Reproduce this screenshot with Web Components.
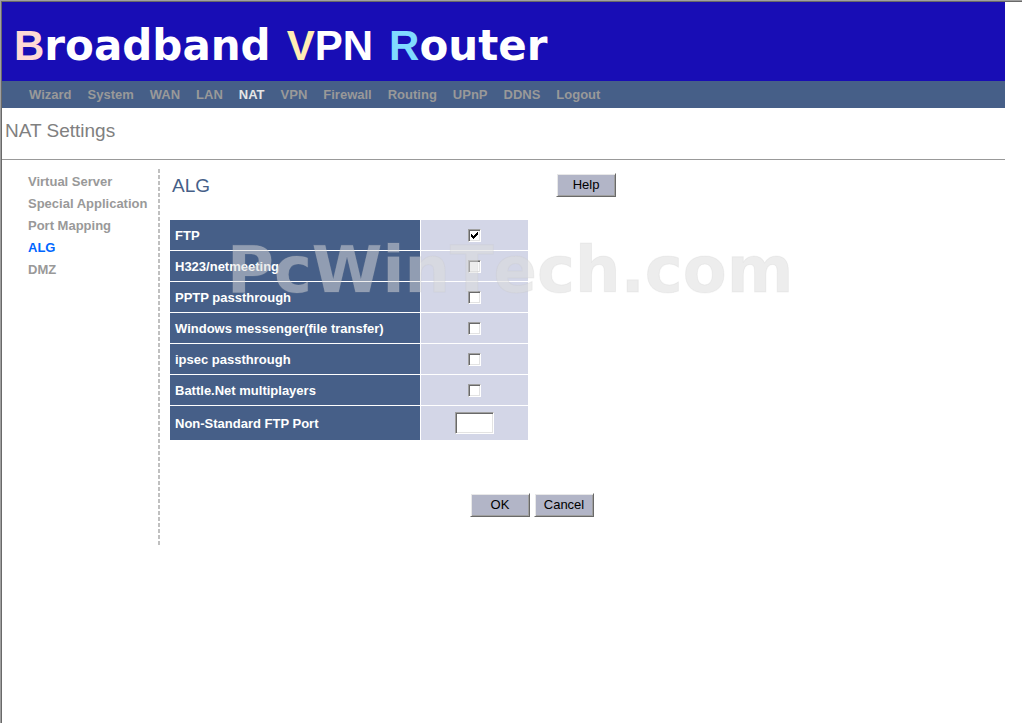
<!DOCTYPE html>
<html lang="en">
<head>
<meta charset="utf-8">
<title>Broadband VPN Router</title>
<style>
  html {
    height: 100%;
  }

  body {
    margin: 0;
    min-height: 100%;
    display: flex;
    background: #fff;
    font-family: "Liberation Sans", Arial, sans-serif;
    font-size: 13px;
  }
</style>
</head>
<body>
<router-page>
  <router-banner slot="banner"></router-banner>
  <nav-bar slot="nav" items="Wizard,System,WAN,LAN,NAT,VPN,Firewall,Routing,UPnP,DDNS,Logout" current="NAT"></nav-bar>
  <span slot="title">NAT Settings</span>
  <side-menu slot="menu" items="Virtual Server,Special Application,Port Mapping,ALG,DMZ" current="ALG"></side-menu>
  <alg-form></alg-form>
  <water-mark slot="mark">PcWinTech.com</water-mark>
</router-page>

<script>
class RouterPage extends HTMLElement {
  constructor() {
    super();
    this.attachShadow({ mode: "open" });
    this.shadowRoot.innerHTML = `
      <style>
        :host {
          display: block;
          flex: 1;
          box-sizing: border-box;
          border-top: 1px solid #a0a0a0;
          border-left: 1px solid #a0a0a0;
          box-shadow: inset 1px 1px 0 #696969;
          padding: 1px 17px 0 1px;
        }

        h1 {
          margin: 0;
          padding: 12px 3px 18px;
          border-bottom: 1px solid #999;
          font-size: 19px;
          line-height: 21px;
          font-weight: normal;
          color: #808080;
        }

        .content {
          position: relative;
          display: grid;
          grid-template-columns: 158px 1fr;
          padding-top: 9px;
        }
      </style>
      <header>
        <slot name="banner"></slot>
        <slot name="nav"></slot>
      </header>
      <h1><slot name="title"></slot></h1>
      <div class="content">
        <slot name="menu"></slot>
        <main><slot></slot></main>
        <slot name="mark"></slot>
      </div>
    `;
  }
}

class RouterBanner extends HTMLElement {
  constructor() {
    super();
    this.attachShadow({ mode: "open" });
    this.shadowRoot.innerHTML = `
      <style>
        :host {
          display: block;
          height: 79px;
          background: #180db5;
        }

        .logo {
          display: flex;
          align-items: baseline;
          gap: 16px;
          padding: 16px 12px 0;
          font-family: "DejaVu Sans", sans-serif;
          font-size: 42px;
          line-height: 56px;
          font-weight: bold;
          color: #fff;
        }

        b {
          font-family: "Liberation Sans", sans-serif;
          font-size: 42px;
        }

        .pink { color: #ffd9d6; }
        .cream { color: #ffecb5; }
        .sky { color: #80daff; }
      </style>
      <div class="logo">
        <span><b class="pink">B</b>roadband</span>
        <span><b><span class="cream">V</span>PN</b></span>
        <span><b class="sky">R</b>outer</span>
      </div>
    `;
  }
}

class NavBar extends HTMLElement {
  constructor() {
    super();
    this.attachShadow({ mode: "open" });
    this.shadowRoot.innerHTML = `
      <style>
        :host {
          display: block;
          background: #465f88;
        }

        nav {
          display: flex;
          flex-wrap: wrap;
          gap: 0 16px;
          padding: 0 27px;
        }

        a {
          line-height: 27px;
          font-weight: bold;
          color: #999;
          text-decoration: none;
        }

        a[aria-current] {
          color: #e6e6e6;
        }
      </style>
      <nav></nav>
    `;
    renderLinks(this, this.shadowRoot.querySelector("nav"));
  }
}

class SideMenu extends HTMLElement {
  constructor() {
    super();
    this.attachShadow({ mode: "open" });
    this.shadowRoot.innerHTML = `
      <style>
        :host {
          display: block;
          min-height: 378px;
          background: repeating-linear-gradient(#c0c0c0 0 4px, transparent 4px 6px) right / 2px 100% no-repeat;
        }

        nav {
          display: flex;
          flex-direction: column;
          align-items: flex-start;
          padding: 2px 0 0 26px;
        }

        a {
          line-height: 22px;
          font-weight: bold;
          color: #999;
          text-decoration: none;
          white-space: nowrap;
        }

        a[aria-current] {
          color: #0066ff;
        }
      </style>
      <nav></nav>
    `;
    renderLinks(this, this.shadowRoot.querySelector("nav"));
  }
}

function renderLinks(host, nav) {
  const current = host.getAttribute("current");
  nav.innerHTML = host
    .getAttribute("items")
    .split(",")
    .map(
      (item) =>
        `<a href="#"${item === current ? ' aria-current="page"' : ""}>${item}</a>`
    )
    .join("");
}

class PushButton extends HTMLElement {
  constructor() {
    super();
    this.attachShadow({ mode: "open" });
    this.shadowRoot.innerHTML = `
      <style>
        :host {
          display: block;
        }

        button {
          display: block;
          min-width: 60px;
          height: 24px;
          padding: 0 6px 2px;
          border: 1px solid;
          border-color: #fff #696969 #696969 #fff;
          border-radius: 0;
          box-shadow: inset 1px 1px 0 #e8e8e8, inset -1px -1px 0 #a0a0a0;
          background: #b2b5c7;
          font: inherit;
          color: #000;
        }
      </style>
      <button type="button"><slot></slot></button>
    `;
  }
}

class AlgForm extends HTMLElement {
  constructor() {
    super();
    this.attachShadow({ mode: "open" });
    this.shadowRoot.innerHTML = `
      <style>
        :host {
          display: block;
          max-width: 447px;
          padding: 4px 0 0 9px;
        }

        .head {
          display: flex;
          justify-content: space-between;
          padding-left: 3px;
          margin-bottom: 20px;
        }

        h2 {
          margin: 0;
          font-size: 19px;
          line-height: 26px;
          font-weight: normal;
          color: #465f88;
        }

        table {
          width: 360px;
          border-spacing: 1px;
          table-layout: fixed;
        }

        th, td {
          height: 30px;
          padding: 0 5px;
          box-sizing: border-box;
        }

        th {
          width: 250px;
          background: #465f88;
          color: #fff;
          text-align: left;
        }

        td {
          background: #d3d6e7;
          text-align: center;
        }

        .port th, .port td {
          height: 34px;
        }

        input {
          appearance: none;
          display: block;
          margin: 0 auto;
          box-sizing: border-box;
          border: 1px solid;
          border-color: #a0a0a0 #fff #fff #a0a0a0;
          border-radius: 0;
          box-shadow: inset 1px 1px 0 #696969, inset -1px -1px 0 #e3e3e3;
          background: #fff;
          font: inherit;
        }

        input[type="checkbox"] {
          width: 13px;
          height: 13px;
        }

        input[type="checkbox"]:checked {
          background: #fff url('data:image/svg+xml,<svg xmlns="http://www.w3.org/2000/svg" viewBox="0 0 11 11" shape-rendering="crispEdges"><path d="M2 4h1v1h1v1h1v-1h1v-1h1v-1h1v-1h1v3h-1v1h-1v1h-1v1h-1v1h-1v-1h-1v-1h-1z"/></svg>') center / 11px 11px no-repeat;
        }

        input[type="text"] {
          width: 39px;
          height: 22px;
          padding: 2px;
        }

        .actions {
          display: flex;
          justify-content: flex-end;
          gap: 4px;
          margin-top: 52px;
          padding-right: 22px;
        }
      </style>
      <form>
        <div class="head">
          <h2>ALG</h2>
          <push-button>Help</push-button>
        </div>
        <table>
          <tbody></tbody>
        </table>
        <div class="actions">
          <push-button>OK</push-button>
          <push-button>Cancel</push-button>
        </div>
      </form>
    `;

    this.options = [
      { id: "ftp", label: "FTP", checked: true },
      { id: "h323", label: "H323/netmeeting" },
      { id: "pptp", label: "PPTP passthrough" },
      { id: "messenger", label: "Windows messenger(file transfer)" },
      { id: "ipsec", label: "ipsec passthrough" },
      { id: "battlenet", label: "Battle.Net multiplayers" },
    ];

    this.renderRows();
  }

  renderRows() {
    const rows = this.options
      .map(
        ({ id, label, checked }) => `
      <tr>
        <th scope="row"><label for="${id}">${label}</label></th>
        <td><input type="checkbox" id="${id}" ${checked ? "checked" : ""}></td>
      </tr>
    `
      )
      .join("");

    this.shadowRoot.querySelector("tbody").innerHTML = `
      ${rows}
      <tr class="port">
        <th scope="row"><label for="port">Non-Standard FTP Port</label></th>
        <td><input type="text" id="port" maxlength="5"></td>
      </tr>
    `;
  }
}

class WaterMark extends HTMLElement {
  constructor() {
    super();
    this.attachShadow({ mode: "open" });
    this.shadowRoot.innerHTML = `
      <style>
        /* lies over the table and lets clicks through */
        :host {
          position: absolute;
          top: 73px;
          left: 225px;
          font-family: "DejaVu Sans", sans-serif;
          font-size: 64px;
          line-height: 74px;
          font-weight: bold;
          font-kerning: none;
          white-space: nowrap;
          color: rgba(220, 220, 220, 0.5);
          -webkit-text-stroke: 1px rgba(190, 190, 190, 0.15);
          pointer-events: none;
        }
      </style>
      <slot></slot>
    `;
  }
}

customElements.define("router-page", RouterPage);
customElements.define("router-banner", RouterBanner);
customElements.define("nav-bar", NavBar);
customElements.define("side-menu", SideMenu);
customElements.define("push-button", PushButton);
customElements.define("alg-form", AlgForm);
customElements.define("water-mark", WaterMark);
</script>
</body>
</html>
